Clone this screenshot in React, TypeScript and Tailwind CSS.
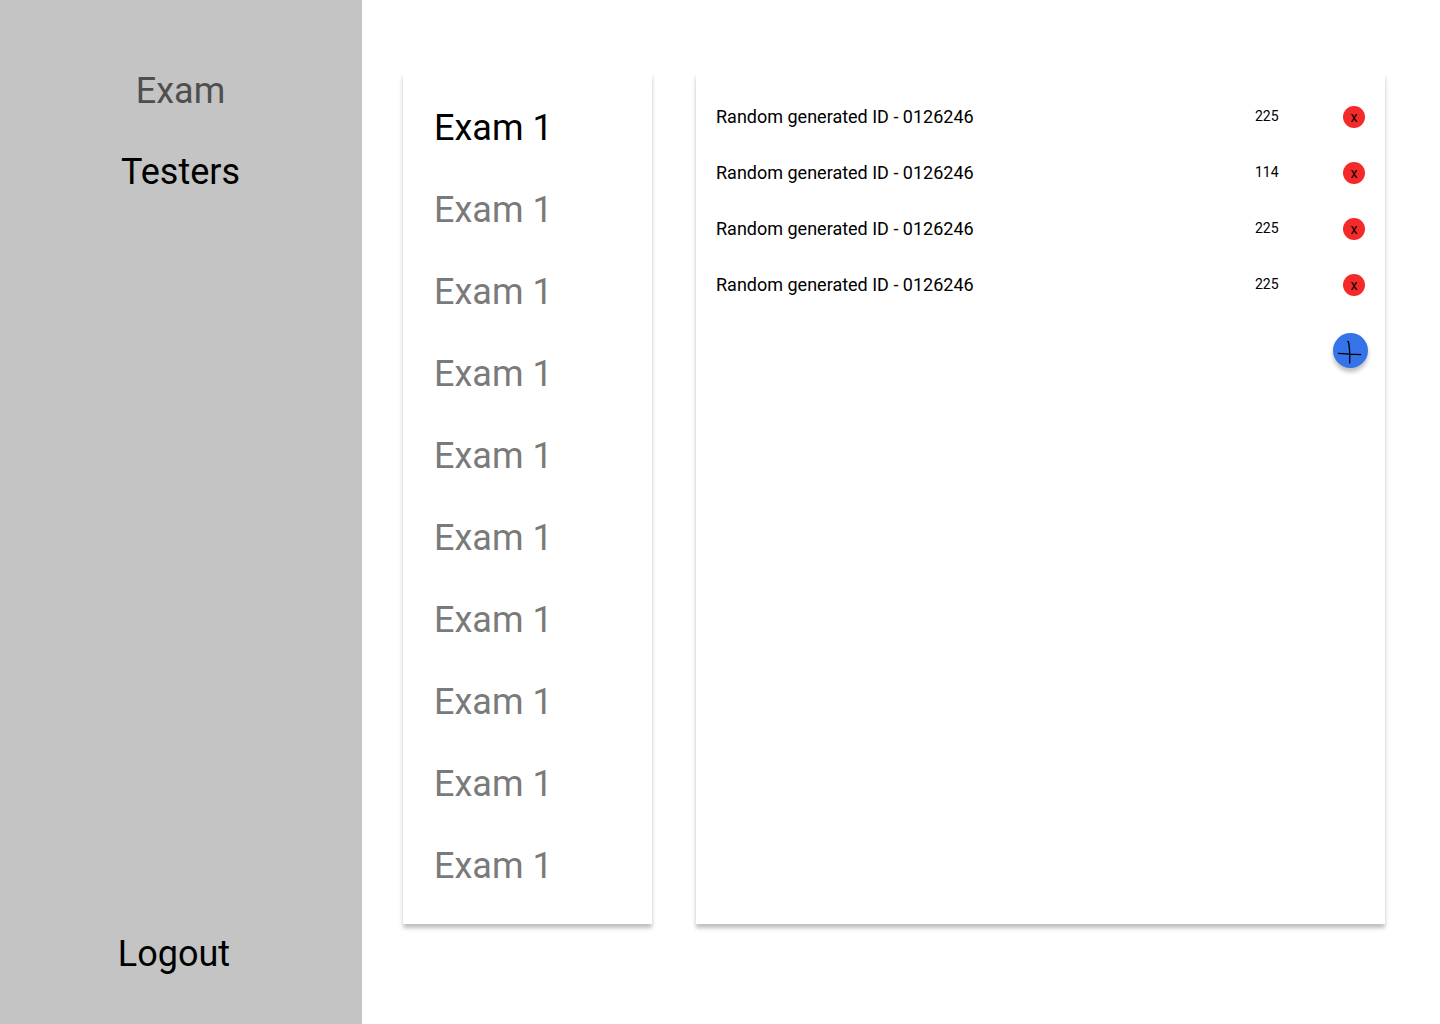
const exams = Array.from({ length: 10 }, (_, i) => ({ id: i, name: 'Exam 1' }));
const testers = [
  { id: 'Random generated ID - 0126246', score: 225 },
  { id: 'Random generated ID - 0126246', score: 114 },
  { id: 'Random generated ID - 0126246', score: 225 },
  { id: 'Random generated ID - 0126246', score: 225 },
];

function Sidebar() {
  return (
    <aside className="flex w-[362px] shrink-0 flex-col bg-[#c4c4c4] pt-[70px] pb-[49px] text-4xl leading-[42px]">
      <nav className="flex flex-col items-center gap-[39px] pr-px">
        <a href="#exam" className="text-[#4f4f4f]">Exam</a>
        <a href="#testers" className="text-black">Testers</a>
      </nav>
      <button type="button" className="mt-auto self-center pr-3.5 text-black">Logout</button>
    </aside>
  );
}

function ExamList() {
  return (
    <section className="w-[249px] shrink-0 bg-white px-[31px] pt-[34px] pb-9 shadow-[0_4px_4px_rgba(0,0,0,0.25)]">
      <ul className="flex flex-col gap-10">
        {exams.map((exam, i) => (
          <li key={exam.id} className="flex">
            <button type="button" className={i === 0 ? 'text-4xl leading-[42px] text-black' : 'text-4xl leading-[42px] text-[#7a7a7a]'}>
              {exam.name}
            </button>
          </li>
        ))}
      </ul>
    </section>
  );
}

function TesterPanel() {
  return (
    <section className="min-w-0 flex-1 bg-white pt-[33px] pr-[17px] pl-5 shadow-[0_4px_4px_rgba(0,0,0,0.25)]">
      <ul className="flex flex-col gap-[34px]">
        {testers.map((tester, i) => (
          <li key={i} className="flex items-start pr-[3px]">
            <span className="flex-1 text-lg leading-[22px]">{tester.id}</span>
            <span className="w-[88px] text-sm leading-5">{tester.score}</span>
            <button type="button" aria-label="Remove tester" className="flex size-[22px] items-center justify-center rounded-full bg-[#f42a2a] text-sm leading-4">
              x
            </button>
          </li>
        ))}
      </ul>
      <div className="mt-[37px] flex justify-end">
        <button type="button" aria-label="Add tester" className="flex size-[35px] items-center justify-center rounded-full bg-[#3574e8] shadow-[0_4px_4px_rgba(0,0,0,0.25)]">
          <svg viewBox="0 0 35 35" className="size-full" fill="none" stroke="black" strokeWidth="1.25">
            <path d="M5 20.4C12 21 20 21.5 28.2 21.5M14.2 8.5H15.4C16.8 15 17 22 16.7 30.5" />
          </svg>
        </button>
      </div>
    </section>
  );
}

export default function App() {
  return (
    <div className="flex min-h-screen bg-white font-[Roboto,sans-serif] text-black">
      <Sidebar />
      <main className="flex min-w-0 flex-1 gap-11 pt-[73px] pr-[55px] pb-[100px] pl-[41px]">
        <ExamList />
        <TesterPanel />
      </main>
    </div>
  );
}
